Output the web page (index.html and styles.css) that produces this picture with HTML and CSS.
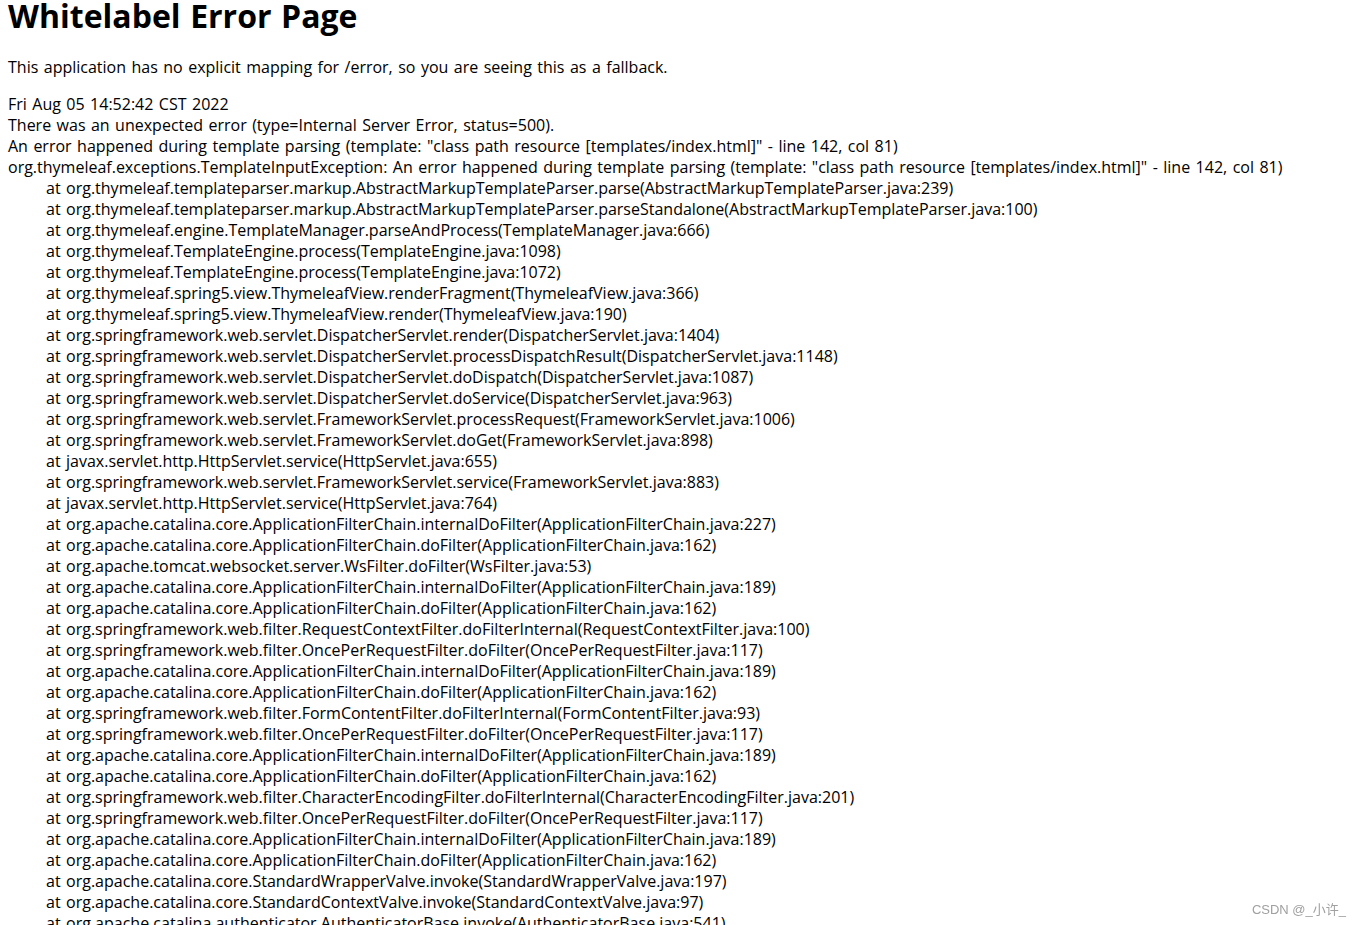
FILE: index.html
```html
<!DOCTYPE html>
<html lang="en">
<head>
    <meta charset="UTF-8">
    <title>Error</title>
    <link rel="stylesheet" href="styles.css">
</head>
<body>
<h1>Whitelabel Error Page</h1>
<p>This application has no explicit mapping for /error, so you are seeing this as a fallback.</p>
<div id="created">Fri Aug 05 14:52:42 CST 2022</div>
<div>There was an unexpected error (type=Internal Server Error, status=500).</div>
<div>An error happened during template parsing (template: &quot;class path resource [templates/index.html]&quot; - line 142, col 81)</div>
<div class="trace">org.thymeleaf.exceptions.TemplateInputException: An error happened during template parsing (template: &quot;class path resource [templates/index.html]&quot; - line 142, col 81)
	at org.thymeleaf.templateparser.markup.AbstractMarkupTemplateParser.parse(AbstractMarkupTemplateParser.java:239)
	at org.thymeleaf.templateparser.markup.AbstractMarkupTemplateParser.parseStandalone(AbstractMarkupTemplateParser.java:100)
	at org.thymeleaf.engine.TemplateManager.parseAndProcess(TemplateManager.java:666)
	at org.thymeleaf.TemplateEngine.process(TemplateEngine.java:1098)
	at org.thymeleaf.TemplateEngine.process(TemplateEngine.java:1072)
	at org.thymeleaf.spring5.view.ThymeleafView.renderFragment(ThymeleafView.java:366)
	at org.thymeleaf.spring5.view.ThymeleafView.render(ThymeleafView.java:190)
	at org.springframework.web.servlet.DispatcherServlet.render(DispatcherServlet.java:1404)
	at org.springframework.web.servlet.DispatcherServlet.processDispatchResult(DispatcherServlet.java:1148)
	at org.springframework.web.servlet.DispatcherServlet.doDispatch(DispatcherServlet.java:1087)
	at org.springframework.web.servlet.DispatcherServlet.doService(DispatcherServlet.java:963)
	at org.springframework.web.servlet.FrameworkServlet.processRequest(FrameworkServlet.java:1006)
	at org.springframework.web.servlet.FrameworkServlet.doGet(FrameworkServlet.java:898)
	at javax.servlet.http.HttpServlet.service(HttpServlet.java:655)
	at org.springframework.web.servlet.FrameworkServlet.service(FrameworkServlet.java:883)
	at javax.servlet.http.HttpServlet.service(HttpServlet.java:764)
	at org.apache.catalina.core.ApplicationFilterChain.internalDoFilter(ApplicationFilterChain.java:227)
	at org.apache.catalina.core.ApplicationFilterChain.doFilter(ApplicationFilterChain.java:162)
	at org.apache.tomcat.websocket.server.WsFilter.doFilter(WsFilter.java:53)
	at org.apache.catalina.core.ApplicationFilterChain.internalDoFilter(ApplicationFilterChain.java:189)
	at org.apache.catalina.core.ApplicationFilterChain.doFilter(ApplicationFilterChain.java:162)
	at org.springframework.web.filter.RequestContextFilter.doFilterInternal(RequestContextFilter.java:100)
	at org.springframework.web.filter.OncePerRequestFilter.doFilter(OncePerRequestFilter.java:117)
	at org.apache.catalina.core.ApplicationFilterChain.internalDoFilter(ApplicationFilterChain.java:189)
	at org.apache.catalina.core.ApplicationFilterChain.doFilter(ApplicationFilterChain.java:162)
	at org.springframework.web.filter.FormContentFilter.doFilterInternal(FormContentFilter.java:93)
	at org.springframework.web.filter.OncePerRequestFilter.doFilter(OncePerRequestFilter.java:117)
	at org.apache.catalina.core.ApplicationFilterChain.internalDoFilter(ApplicationFilterChain.java:189)
	at org.apache.catalina.core.ApplicationFilterChain.doFilter(ApplicationFilterChain.java:162)
	at org.springframework.web.filter.CharacterEncodingFilter.doFilterInternal(CharacterEncodingFilter.java:201)
	at org.springframework.web.filter.OncePerRequestFilter.doFilter(OncePerRequestFilter.java:117)
	at org.apache.catalina.core.ApplicationFilterChain.internalDoFilter(ApplicationFilterChain.java:189)
	at org.apache.catalina.core.ApplicationFilterChain.doFilter(ApplicationFilterChain.java:162)
	at org.apache.catalina.core.StandardWrapperValve.invoke(StandardWrapperValve.java:197)
	at org.apache.catalina.core.StandardContextValve.invoke(StandardContextValve.java:97)
	at org.apache.catalina.authenticator.AuthenticatorBase.invoke(AuthenticatorBase.java:541)
	at org.apache.catalina.core.StandardHostValve.invoke(StandardHostValve.java:135)
	at org.apache.catalina.valves.ErrorReportValve.invoke(ErrorReportValve.java:92)
</div>
<div class="mark">CSDN @_小许_</div>
</body>
</html>
```

FILE: styles.css
```css
html{
    overflow: hidden;
}
body{
    margin: 0;
    padding: 0 8px;
    font-family: "Open Sans", "Noto Sans CJK SC", sans-serif;
    font-size: 16px;
    line-height: 21px;
    word-spacing: 1.3px;
    color: #000;
    background: #fff;
}
h1{
    font-size: 32px;
    line-height: 32px;
    font-weight: bold;
    margin: 0 0 25px;
}
p{
    margin: 16px 0;
}
.trace{
    white-space: pre-wrap;
    tab-size: 38px;
}
.mark{
    position: fixed;
    right: 15px;
    bottom: 5px;
    font-family: "Liberation Sans", "Noto Sans CJK SC", sans-serif;
    font-size: 13px;
    word-spacing: 0;
    color: #a0a0a0;
}
```
